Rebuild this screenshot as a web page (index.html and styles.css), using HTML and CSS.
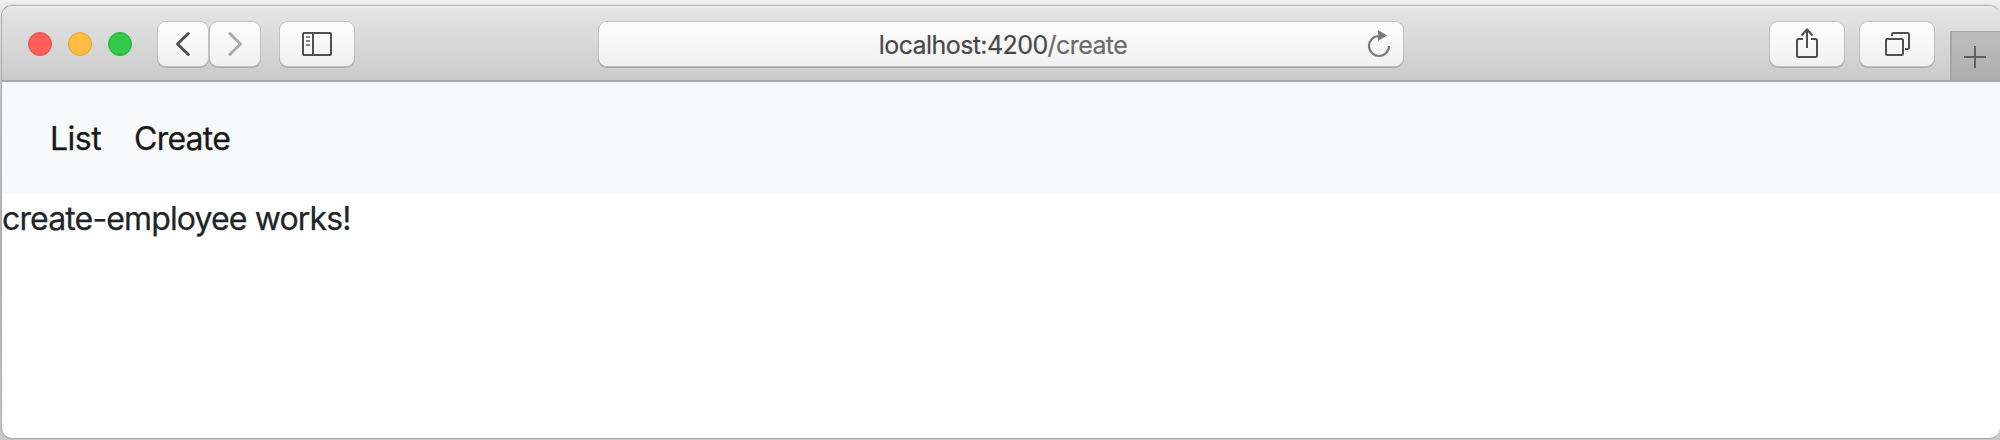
FILE: index.html
```html
<!DOCTYPE html>
<html lang="en">
<head>
<meta charset="utf-8">
<title>localhost:4200/create</title>
<link rel="stylesheet" href="styles.css">
</head>
<body>
<div class="window">
  <header class="toolbar">
    <div class="lights"><i class="light red"></i><i class="light yellow"></i><i class="light green"></i></div>
    <div class="history">
      <button class="button nav-button" aria-label="Back"><svg width="50" height="44" viewBox="0 0 50 44"><path d="M30.300 11.500 19.500 22 30.300 32.500" fill="none" stroke="#505050" stroke-width="3" stroke-linecap="round" stroke-linejoin="round"/></svg></button>
      <button class="button nav-button" aria-label="Forward"><svg width="50" height="44" viewBox="0 0 50 44"><path d="M19.800 11.500 30.500 22 19.800 32.500" fill="none" stroke="#aaa" stroke-width="3" stroke-linecap="round" stroke-linejoin="round"/></svg></button>
    </div>
    <button class="button sidebar-button" aria-label="Sidebar"><svg width="74" height="44" viewBox="0 0 74 44"><rect x="23" y="11" width="28" height="22" rx="1" fill="none" stroke="#505050" stroke-width="2"/><path d="M33 11v22" stroke="#505050" stroke-width="2"/><path d="M26 15h4M26 19h4M26 23h4" stroke="#858585" stroke-width="2"/></svg></button>
    <div class="address">
      <span class="url">localhost:4200<span class="path">/create</span></span>
      <svg class="reload" width="24" height="28" viewBox="0 0 24 28"><path d="M12 6A10 10 0 1 0 22 16" fill="none" stroke="#7b7b7b" stroke-width="2.200"/><path d="M11 0 20 5.500 11 11Z" fill="#7b7b7b"/></svg>
    </div>
    <div class="actions">
      <button class="button" aria-label="Share"><svg width="74" height="44" viewBox="0 0 74 44"><g fill="none" stroke="#505050" stroke-width="2"><path d="M33 17h-4.500q-1.500 0-1.500 1.500v15q0 1.500 1.500 1.500h17q1.500 0 1.500-1.500v-15q0-1.500-1.500-1.500H41"/><path d="M37 26V8M31.500 13.500 37 7.500l5.500 6"/></g></svg></button>
      <button class="button" aria-label="Show tabs"><svg width="74" height="44" viewBox="0 0 74 44"><g fill="none" stroke="#505050" stroke-width="2"><rect x="26" y="17" width="17" height="16" rx="1.500"/><path d="M32 14v-1.500q0-1.500 1.500-1.500h14q1.500 0 1.500 1.500v13q0 1.500-1.500 1.500H45"/></g></svg></button>
    </div>
    <button class="new-tab" aria-label="New tab"><svg width="48" height="48" viewBox="0 0 48 48"><path d="M12 25h22M23 14v22" stroke="#606060" stroke-width="2"/></svg></button>
  </header>
  <nav class="navbar"><a class="link list">List</a><a class="link create">Create</a></nav>
  <main class="content"><p class="message">create-employee works!</p></main>
</div>
</body>
</html>
```
FILE: styles.css
```css
* { box-sizing: border-box; }
body {
  margin: 0;
  height: 440px;
  padding: 5px 0 0 1px;
  overflow: hidden;
  background: linear-gradient(#f1f2f2 0, #e7e9e9 5px, #c4c4c4 100px, #b0b0b0 260px, #c9c9c9 440px);
  font-family: Inter, "Liberation Sans", sans-serif;
}
.window {
  width: 1999px;
  height: 434px;
  border: 1px solid #aaa;
  border-right: 0;
  border-radius: 11px;
  overflow: hidden;
  background: #fff;
}
.toolbar {
  display: flex;
  align-items: flex-start;
  height: 76px;
  padding: 16px 0 0 26px;
  border-bottom: 2px solid #a9a9a8;
  background: linear-gradient(#f4f4f4 0, #e4e4e4 2px, #cbcbcb 100%);
}
.lights { display: flex; gap: 16px; padding-top: 10px; margin-right: 26px; }
.light { width: 24px; height: 24px; border-radius: 50%; border: 1px solid; }
.red { background: #ff5f5a; border-color: #e04b48; }
.yellow { background: #ffbe41; border-color: #dfa138; }
.green { background: #33c94a; border-color: #20ad32; }
.button {
  display: block;
  width: 74px;
  height: 44px;
  padding: 0;
  border: 0;
  border-radius: 8px;
  background: linear-gradient(#fdfdfd, #f1f1f1);
  box-shadow: 0 0 0 1px #c0c0c0, 0 1px 0 1px #aaa;
}
.button svg, .new-tab svg { display: block; }
.history { display: flex; gap: 2px; margin-right: 20px; }
.nav-button { width: 50px; }
.address {
  display: flex;
  align-items: center;
  justify-content: center;
  position: relative;
  width: 804px;
  height: 44px;
  margin-left: 245px;
  border-radius: 8px;
  background: linear-gradient(#fdfdfd, #f1f1f1);
  box-shadow: 0 0 0 1px #c0c0c0, 0 1px 0 1px #a5a5a5;
}
.url {
  padding: 2px 0 0 4px;
  font-size: 25px;
  line-height: 44px;
  letter-spacing: -0.58px;
  color: #484848;
  -webkit-text-stroke: 0.2px;
}
.path { color: #6b6b6b; }
.reload { position: absolute; right: 12px; top: 8px; }
.actions { display: flex; gap: 16px; margin-left: 367px; }
.new-tab {
  width: 50px;
  height: 49px;
  margin: 9px 0 0 16px;
  padding: 0;
  border: solid #a6a6a6;
  border-width: 1px 0 0 2px;
  background: linear-gradient(#bebebe, #aeaeae);
}
.navbar {
  display: flex;
  height: 112px;
  padding: 33px 0 0 48px;
  background: #f8f9fb;
}
.link, .message { font-size: 32px; line-height: 48px; -webkit-text-stroke: 0.25px; }
.link { color: #191919; }
.list { width: 84px; letter-spacing: -0.5px; }
.create { letter-spacing: -0.75px; }
.message { margin: 0; padding-top: 1px; letter-spacing: -0.86px; color: #212529; }
```
